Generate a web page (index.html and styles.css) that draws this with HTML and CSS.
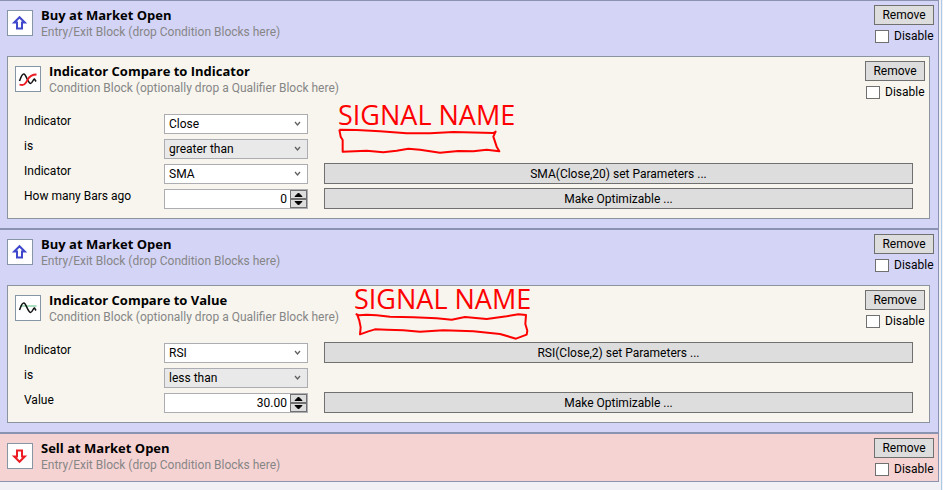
FILE: index.html
```
<!DOCTYPE html>
<html lang="en">
<head>
    <meta charset="UTF-8">
    <meta name="viewport" content="width=device-width, initial-scale=1.0">
    <title>Building Blocks</title>
    <link rel="stylesheet" href="styles.css">
</head>
<body>
    <main>
        <section class="block buy">
            <div class="block-header">
                <svg class="icon" viewBox="0 0 24 24"><path d="M11.5 6.2L6.2 11.5H9V17.5H14V11.5H16.8Z" fill="#fff" stroke="#3f48cc" stroke-width="2"/></svg>
                <div class="titles">
                    <h2>Buy at Market Open</h2>
                    <p>Entry/Exit Block (drop Condition Blocks here)</p>
                </div>
                <div class="actions">
                    <button type="button">Remove</button>
                    <label><input type="checkbox"> Disable</label>
                </div>
            </div>

            <div class="card">
                <div class="block-header">
                    <svg class="icon" viewBox="0 0 24 24" fill="none" stroke-width="1.5"><path d="M3.5 14C5 10 6 6.500 8 7C10 7.500 12 16 14.500 16.500C16.500 16.500 17 12 18.500 12L20 14.500" stroke="#111"/><path d="M3.500 17.500C8 19 9.500 17 11.500 13C13.500 9 16 7.500 20.500 7.500" stroke="#ed1c24" stroke-width="1.800"/></svg>
                    <div class="titles">
                        <h2>Indicator Compare to Indicator</h2>
                        <p>Condition Block (optionally drop a Qualifier Block here)</p>
                    </div>
                    <div class="actions">
                        <button type="button">Remove</button>
                        <label><input type="checkbox"> Disable</label>
                    </div>
                </div>
                <div class="fields">
                    <label for="ind1">Indicator</label>
                    <select id="ind1"><option>Close</option></select>

                    <label for="op1">is</label>
                    <select id="op1" class="gray"><option>greater than</option></select>

                    <label for="ind2">Indicator</label>
                    <select id="ind2"><option>SMA</option></select>
                    <button type="button">SMA(Close,20) set Parameters ...</button>

                    <label for="bars">How many Bars ago</label>
                    <div class="spinner">
                        <input type="text" id="bars" value="0">
                        <button type="button" aria-label="Increase"><svg viewBox="0 0 15 7"><path d="M4 5.500L7.500 2L11 5.500Z" /></svg></button>
                        <button type="button" aria-label="Decrease"><svg viewBox="0 0 15 7"><path d="M4 1.500L7.500 5L11 1.500Z" /></svg></button>
                    </div>
                    <button type="button">Make Optimizable ...</button>
                </div>
                <div class="note note-first">
                    <span>SIGNAL NAME</span>
                    <svg width="163" height="27" viewBox="24 114 489 81"><path d="M28 119L80 120L150 124L190 127L230 130H300L370 126L490 129L497 125L490 140L500 170L508 184L470 179L430 184L385 183L330 188L270 179L235 176L200 182L160 187L110 182L38 185V150L32 140L28 119"/></svg>
                </div>
            </div>
        </section>

        <section class="block buy">
            <div class="block-header">
                <svg class="icon" viewBox="0 0 24 24"><path d="M11.5 6.2L6.2 11.5H9V17.5H14V11.5H16.8Z" fill="#fff" stroke="#3f48cc" stroke-width="2"/></svg>
                <div class="titles">
                    <h2>Buy at Market Open</h2>
                    <p>Entry/Exit Block (drop Condition Blocks here)</p>
                </div>
                <div class="actions">
                    <button type="button">Remove</button>
                    <label><input type="checkbox"> Disable</label>
                </div>
            </div>

            <div class="card">
                <div class="block-header">
                    <svg class="icon" viewBox="0 0 24 24" fill="none" stroke-width="1.5"><path d="M4 10H20.500" stroke="#a9dfbf" stroke-width="2"/><path d="M3.500 14C5 10 6 6.500 8 7C10 7.500 12 16 14.500 16.500C16.500 16.500 17 12 18.500 12L20 14.500" stroke="#111"/></svg>
                    <div class="titles">
                        <h2>Indicator Compare to Value</h2>
                        <p>Condition Block (optionally drop a Qualifier Block here)</p>
                    </div>
                    <div class="actions">
                        <button type="button">Remove</button>
                        <label><input type="checkbox"> Disable</label>
                    </div>
                </div>
                <div class="fields">
                    <label for="ind3">Indicator</label>
                    <select id="ind3"><option>RSI</option></select>
                    <button type="button">RSI(Close,2) set Parameters ...</button>

                    <label for="op2">is</label>
                    <select id="op2" class="gray"><option>less than</option></select>

                    <label for="val">Value</label>
                    <div class="spinner">
                        <input type="text" id="val" value="30.00">
                        <button type="button" aria-label="Increase"><svg viewBox="0 0 15 7"><path d="M4 5.500L7.500 2L11 5.500Z" /></svg></button>
                        <button type="button" aria-label="Decrease"><svg viewBox="0 0 15 7"><path d="M4 1.500L7.500 5L11 1.500Z" /></svg></button>
                    </div>
                    <button type="button">Make Optimizable ...</button>
                </div>
                <div class="note note-second">
                    <span>SIGNAL NAME</span>
                    <svg width="175" height="29" viewBox="42 94 525 87"><path d="M47 100L58 104L80 102L110 104L150 108L220 110L290 113L335 117L375 109L440 115L500 107L535 101L558 103L556 130L562 150L560 162L528 174L480 160L400 152L310 149L240 153L190 149L140 147L105 146L85 152L60 161L62 140L58 120L52 103"/></svg>
                </div>
            </div>
        </section>

        <section class="block sell">
            <div class="block-header">
                <svg class="icon" viewBox="0 0 24 24"><path d="M11.5 17.800L6.2 12.500H9V6.500H14V12.500H16.800Z" fill="#fff" stroke="#ed1c24" stroke-width="2"/></svg>
                <div class="titles">
                    <h2>Sell at Market Open</h2>
                    <p>Entry/Exit Block (drop Condition Blocks here)</p>
                </div>
                <div class="actions">
                    <button type="button">Remove</button>
                    <label><input type="checkbox"> Disable</label>
                </div>
            </div>
        </section>
    </main>
</body>
</html>
```
FILE: styles.css
```
* {
    box-sizing: border-box;
}

body {
    margin: 0;
    background-color: #f0f0f5;
    font-family: Roboto, "Open Sans", sans-serif;
    font-size: 12px;
    line-height: 16px;
    color: black;
}

main {
    min-height: 100vh;
    margin-right: 1px;
    padding-right: 2px;
    border-right: 1px solid #a9cbe6;
}

h2, p {
    margin: 0;
}

h2 {
    font-family: "Open Sans", "Noto Sans", sans-serif;
    font-size: 13px;
    line-height: 18px;
    font-weight: bold;
}

p {
    color: #868686;
    white-space: nowrap;
}

button, select, input {
    font: inherit;
    color: black;
    margin: 0;
}

button {
    height: 21px;
    padding: 0;
    background-color: #dddddd;
    border: 1px solid #707070;
}

.block {
    padding: 4px 8px 9px 7px;
    border: solid #8a94b0;
    border-width: 1px 1px 1px 0;
}

.buy {
    background-color: #d4d4f7;
}

.sell {
    background-color: #f6d3d3;
    padding-bottom: 0;
}

.block-header {
    display: flex;
    align-items: flex-start;
}

.block-header .titles {
    flex: 1;
    padding-left: 8px;
    padding-top: 1px;
}

.icon {
    width: 26px;
    height: 26px;
    margin-top: 5px;
    background-color: white;
    border: 1px solid #8796a5;
}

.actions {
    width: 60px;
    margin-right: -4px;
}

.actions button {
    display: block;
    width: 60px;
    height: 20px;
}

.actions label {
    display: flex;
    align-items: center;
    gap: 5px;
    margin-top: 3px;
    padding-left: 1px;
}

input[type="checkbox"] {
    appearance: none;
    flex: none;
    width: 14px;
    height: 13px;
    background-color: white;
    border: 1px solid #707070;
}

.block > .block-header {
    height: 51px;
}

.sell > .block-header {
    height: 43px;
}

.card {
    position: relative;
    padding: 4px 8px 9px 7px;
    background-color: #f7f5ee;
    border: 1px solid #8a949e;
}

.card > .block-header {
    height: 52px;
}

.fields {
    display: grid;
    grid-template-columns: 140px 144px 1fr;
    grid-auto-rows: 21px;
    row-gap: 4px;
    padding: 0 8px 0 9px;
}

.fields > label {
    grid-column: 1;
}

.fields select, .spinner {
    grid-column: 2;
    align-self: end;
    height: 20px;
    border: 1px solid #abadb3;
    background-color: white;
}

.fields > button {
    grid-column: 3;
    margin-left: 16px;
}

.fields select {
    appearance: none;
    padding: 0 4px;
    border-radius: 0;
    background: white url("data:image/svg+xml,%3Csvg xmlns='http://www.w3.org/2000/svg' width='7' height='6'%3E%3Cpath d='M1 1L3.500 4L6 1' fill='none' stroke='%23606060' stroke-width='1.300'/%3E%3C/svg%3E") no-repeat right 6px center;
}

.fields select.gray {
    background-color: #e9e9e9;
}

.spinner {
    display: grid;
    grid-template-columns: 1fr 17px;
    grid-template-rows: 9px 9px;
}

.spinner input {
    grid-row: 1 / 3;
    width: 100%;
    height: 18px;
    padding: 0 3px;
    border: none;
    background: none;
    text-align: right;
}

.spinner button {
    display: flex;
    height: 9px;
}

.spinner svg {
    width: 15px;
    height: 7px;
}

.spinner path {
    fill: black;
    stroke: black;
}

/* red pen marks over the cards */
.note {
    position: absolute;
    color: #ff0000;
}

.note span {
    display: block;
    font-family: "Open Sans", "Noto Sans", sans-serif;
    font-size: 27px;
    line-height: 26px;
    white-space: nowrap;
}

.note svg {
    display: block;
}

.note path {
    fill: none;
    stroke: #ff0000;
    stroke-width: 6;
    stroke-linejoin: round;
}

.note-first {
    left: 330px;
    top: 45px;
}

.note-second {
    left: 346px;
    top: 0;
}
```
